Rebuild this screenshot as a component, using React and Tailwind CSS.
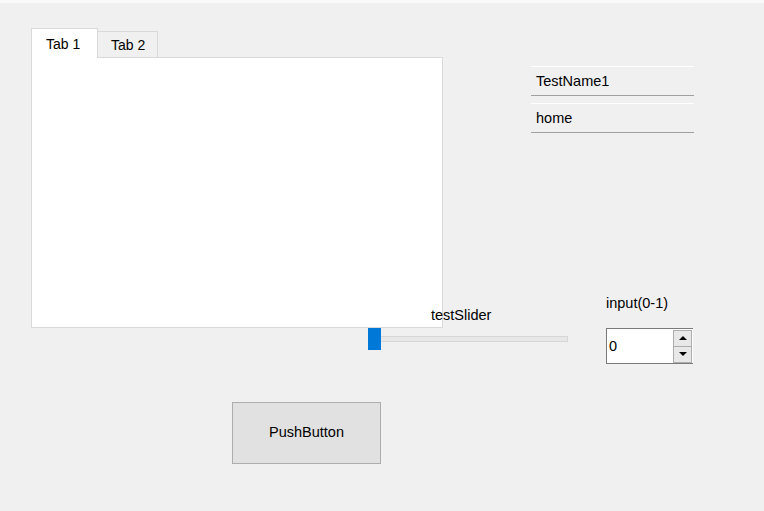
import React, { useState } from 'react';

export default function App() {
  const [tab, setTab] = useState(0);
  const [value, setValue] = useState(0);

  return (
    <div className="w-[764px] h-[511px] overflow-hidden bg-[#f0f0f0] text-black text-[14.5px] font-['Liberation_Sans',Arial,sans-serif]">
      <div className="h-[3px] bg-[#fafafa]" />

      <div className="pl-[31px] pt-[25px]">
        {/* Tabs + line edits */}
        <div className="flex items-start">
          <div className="w-[412px]">
            <div className="flex items-end h-[29px] text-[14px]">
              <button
                onClick={() => setTab(0)}
                className="relative z-10 -mb-px w-[67px] h-[30px] bg-white border border-b-0 border-[#d9d9d9] text-left pl-[14px] pt-px leading-4"
              >
                Tab 1
              </button>
              <button
                onClick={() => setTab(1)}
                className="w-[60px] h-[26px] bg-[#f0f0f0] border-t border-r border-[#d9d9d9] text-left pl-[13px] leading-4"
              >
                Tab 2
              </button>
            </div>
            <div className="h-[271px] bg-white border border-[#d9d9d9]">{tab === 1 && null}</div>
          </div>

          <div className="ml-[88px] mt-[38px] w-[163px] flex flex-col gap-[7px]">
            {['TestName1', 'home'].map(t => (
              <div key={t} className="h-[30px] border-t border-b border-t-white border-b-[#a0a0a0] flex items-center pl-[5px] pt-px">
                {t}
              </div>
            ))}
          </div>
        </div>

        {/* Slider + spin box */}
        <div className="relative z-10 -mt-[33px] flex items-start">
          <div className="ml-[337px] w-[200px] pt-[12px]">
            <div className="pl-[63px] leading-4">testSlider</div>
            <div className="relative mt-[5px] h-[22px]">
              <div className="absolute left-[12px] top-[8px] w-[188px] h-[6px] bg-[#e7e7e7] border border-[#d6d6d6]" />
              <div className="absolute left-0 top-0 w-[13px] h-[22px] bg-[#0078d7]" />
            </div>
          </div>

          <div className="ml-[38px]">
            <div className="leading-4">input(0-1)</div>
            <div className="mt-[17px] w-[87px] h-[36px] bg-white border border-r-0 border-[#7a7a7a] flex items-center">
              <div className="flex-1 pl-[2px] pt-px">{value}</div>
              <div className="flex flex-col mr-px">
                <button
                  onClick={() => setValue(1)}
                  className="w-[19px] h-[17px] bg-[#e8e8e8] border border-[#adadad] flex items-center justify-center"
                >
                  <svg width="8" height="4" viewBox="0 0 8 4"><path d="M4 0L8 4H0z" fill="#000" /></svg>
                </button>
                <button
                  onClick={() => setValue(0)}
                  className="w-[19px] h-[16px] bg-[#e8e8e8] border border-t-0 border-[#adadad] flex items-center justify-center"
                >
                  <svg width="8" height="4" viewBox="0 0 8 4"><path d="M0 0H8L4 4z" fill="#000" /></svg>
                </button>
              </div>
            </div>
          </div>
        </div>

        {/* Push button */}
        <button className="ml-[201px] mt-[38px] w-[149px] h-[62px] bg-[#e1e1e1] border border-[#adadad] flex items-center justify-center">
          PushButton
        </button>
      </div>
    </div>
  );
}
